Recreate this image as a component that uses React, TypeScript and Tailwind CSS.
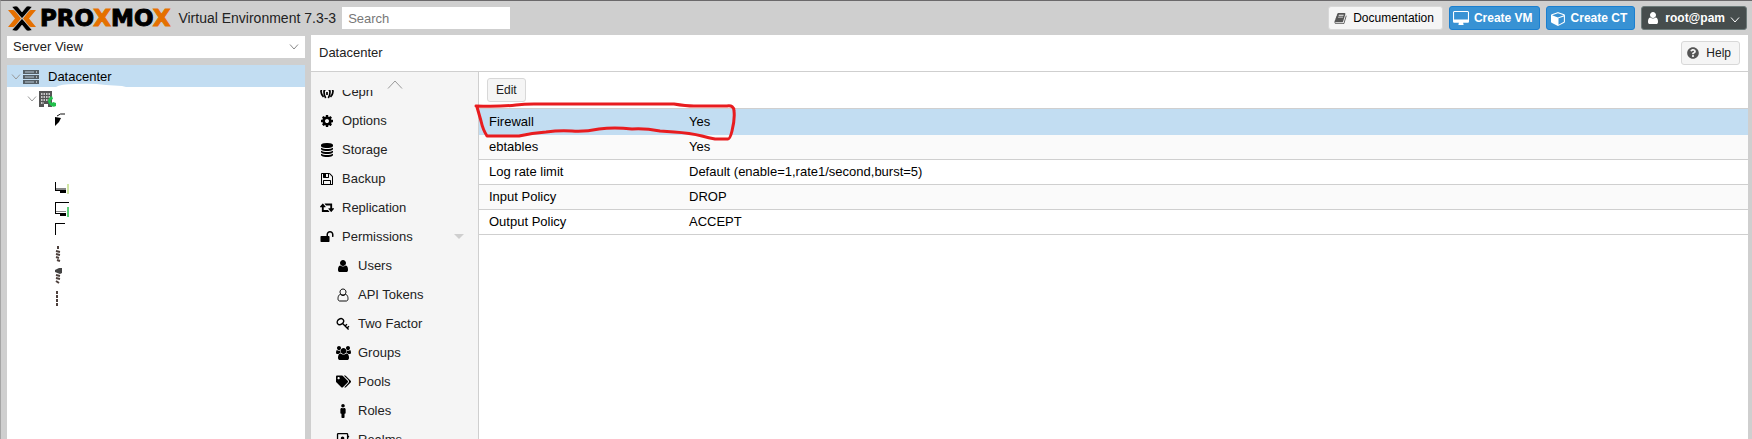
import type { ReactNode } from "react";
import { FaMale, FaQuestionCircle, FaRegAddressBook, FaTags } from "react-icons/fa";

const paths = {
  cube: "M896 1629l640-349v-636l-640 233v752zm-64-865l698-254-698-254-698 254zm832-252v768q0 35-18 65t-49 47l-704 384q-28 16-61 16t-61-16l-704-384q-31-17-49-47t-18-65v-768q0-40 23-73t61-47l704-256q22-8 44-8t44 8l704 256q38 14 61 47t23 73z",
  database:
    "M896 768q237 0 443-43t325-127v170q0 69-103 128t-280 93.5-385 34.5-385-34.5-280-93.5-103-128v-170q119 84 325 127t443 43zm0 768q237 0 443-43t325-127v170q0 69-103 128t-280 93.5-385 34.5-385-34.5-280-93.5-103-128v-170q119 84 325 127t443 43zm0-384q237 0 443-43t325-127v170q0 69-103 128t-280 93.5-385 34.5-385-34.5-280-93.5-103-128v-170q119 84 325 127t443 43zm0-1152q208 0 385 34.5t280 93.5 103 128v128q0 69-103 128t-280 93.5-385 34.5-385-34.5-280-93.5-103-128v-128q0-69 103-128t280-93.5 385-34.5z",
  cog: "M1152 896q0-106-75-181t-181-75-181 75-75 181 75 181 181 75 181-75 75-181zm512-109v222q0 12-8 23t-20 13l-185 28q-19 54-39 91 35 50 107 138 10 12 10 25t-9 23q-27 37-99 108t-94 71q-12 0-26-9l-138-108q-44 23-91 38-16 136-29 186-7 28-36 28h-222q-14 0-24.5-8.5t-11.5-21.5l-28-184q-49-16-90-37l-141 107q-10 9-25 9-14 0-25-11-126-114-165-168-7-10-7-23 0-12 8-23 15-21 51-66.5t54-70.5q-27-50-41-99l-183-27q-13-2-21-12.5t-8-23.5v-222q0-12 8-23t19-13l186-28q14-46 39-92-40-57-107-138-10-12-10-24 0-10 9-23 26-36 98.5-107.5t94.5-71.5q13 0 26 10l138 107q44-23 91-38 16-136 29-186 7-28 36-28h222q14 0 24.5 8.5t11.5 21.5l28 184q49 16 90 37l142-107q9-9 24-9 13 0 25 10 129 119 165 170 7 8 7 22 0 12-8 23-15 21-51 66.5t-54 70.5q26 50 41 98l183 28q13 2 21 12.5t8 23.5z",
  floppy:
    "M512 1536h768v-384h-768v384zm896 0h128v-896q0-14-10-38.5t-20-34.5l-281-281q-10-10-34-20t-39-10v416q0 40-28 68t-68 28h-576q-40 0-68-28t-28-68v-416h-128v1280h128v-416q0-40 28-68t68-28h832q40 0 68 28t28 68v416zm-384-928v-320q0-13-9.5-22.5t-22.5-9.5h-192q-13 0-22.5 9.5t-9.5 22.5v320q0 13 9.5 22.5t22.5 9.5h192q13 0 22.5-9.5t9.5-22.5zm640 32v928q0 40-28 68t-68 28h-1344q-40 0-68-28t-28-68v-1344q0-40 28-68t68-28h928q40 0 88 20t76 48l280 280q28 28 48 76t20 88z",
  user: "M1536 1399q0 109-62.5 187t-150.5 78h-854q-88 0-150.5-78t-62.5-187q0-85 8.5-160.5t31.5-152 58.5-131 94-89 134.5-34.5q131 128 313 128t313-128q76 0 134.5 34.5t94 89 58.5 131 31.5 152 8.5 160.5zm-256-887q0 159-112.5 271.5t-271.5 112.5-271.5-112.5-112.5-271.5 112.5-271.5 271.5-112.5 271.5 112.5 112.5 271.5z",
  users:
    "M593 896q-162 5-265 128h-134q-82 0-138-40.5t-56-118.5q0-353 124-353 6 0 43.5 21t97.5 42.5 119 21.5q67 0 133-23-5 37-5 66 0 139 81 256zm1071 637q0 120-73 189.5t-194 69.5h-874q-121 0-194-69.5t-73-189.5q0-53 3.5-103.5t14-109 26.5-108.5 43-97.5 62-81 85.5-53.5 111.5-20q10 0 43 21.5t73 48 107 48 135 21.5 135-21.5 107-48 73-48 43-21.5q61 0 111.5 20t85.5 53.5 62 81 43 97.5 26.5 108.5 14 109 3.5 103.5zm-1024-1277q0 106-75 181t-181 75-181-75-75-181 75-181 181-75 181 75 75 181zm704 384q0 159-112.5 271.5t-271.5 112.5-271.5-112.5-112.5-271.5 112.5-271.5 271.5-112.5 271.5 112.5 112.5 271.5zm576 225q0 78-56 118.5t-138 40.5h-134q-103-123-265-128 81-117 81-256 0-29-5-66 66 23 133 23 59 0 119-21.5t97.5-42.5 43.5-21q124 0 124 353zm-128-609q0 106-75 181t-181 75-181-75-75-181 75-181 181-75 181 75 75 181z",
  desktop:
    "M1728 992v-832q0-13-9.5-22.5t-22.5-9.5h-1600q-13 0-22.5 9.5t-9.5 22.5v832q0 13 9.5 22.5t22.5 9.5h1600q13 0 22.5-9.5t9.5-22.5zm128-832v1088q0 66-47 113t-113 47h-544q0 37 16 77.5t32 71 16 43.5q0 26-19 45t-45 19h-512q-26 0-45-19t-19-45q0-14 16-44t32-70 16-78h-544q-66 0-113-47t-47-113v-1088q0-66 47-113t113-47h1600q66 0 113 47t47 113z",
  book: "M1703 478q40 57 18 129l-275 906q-19 64-76.5 107.5t-122.5 43.5h-923q-77 0-148.5-53.5t-99.5-131.5q-24-67-2-127 0-4 3-27t4-37q1-8-3-21.5t-3-19.5q2-11 8-21t16.5-23.5 16.5-23.5q23-38 45-91.5t30-91.5q3-10 .5-30t-.5-28q3-11 17-28t17-23q21-36 42-92t25-90q1-9-2.5-32t.5-28q4-13 22-30.5t22-22.5q19-26 42.5-84.5t27.5-96.5q1-8-3-25.5t-2-26.5q2-8 9-18t18-23 17-21q8-12 16.5-30.5t15-35 16-36 19.5-32 26.5-23.5 36-11.5 47.5 5.5l-1 3q38-9 51-9h761q74 0 114 56t18 130l-274 906q-36 119-71.5 153.5t-128.5 34.5h-869q-27 0-38 15-11 16-1 43 24 70 144 70h923q29 0 56-15.5t35-41.5l300-987q7-22 5-57 38 15 59 43zm-1064 2q-4 13 2 22.5t20 9.5h608q13 0 25.5-9.5t16.5-22.5l21-64q4-13-2-22.5t-20-9.5h-608q-13 0-25.5 9.5t-16.5 22.5zm-83 256q-4 13 2 22.5t20 9.5h608q13 0 25.5-9.5t16.5-22.5l21-64q4-13-2-22.5t-20-9.5h-608q-13 0-25.5 9.5t-16.5 22.5z",
  retweet:
    "M1280 1504q0 13-9.5 22.5t-22.5 9.5h-960q-8 0-13.5-2t-9-7-5.5-8-3-11.5-1-11.5v-600h-192q-26 0-45-19t-19-45q0-24 15-41l320-384q19-22 49-22t49 22l320 384q15 17 15 41 0 26-19 45t-45 19h-192v384h576q16 0 25 11l160 192q7 10 7 21zm640-416q0 24-15 41l-320 384q-20 23-49 23t-49-23l-320-384q-15-17-15-41 0-26 19-45t45-19h192v-384h-576q-16 0-25-12l-160-192q-7-9-7-20 0-13 9.5-22.5t22.5-9.5h960q8 0 13.5 2t9 7 5.5 8 3 11.5 1 11.5v600h192q26 0 45 19t19 45z",
  unlock:
    "M1728 576v256q0 26-19 45t-45 19h-64q-26 0-45-19t-19-45v-256q0-106-75-181t-181-75-181 75-75 181v192h96q40 0 68 28t28 68v576q0 40-28 68t-68 28h-960q-40 0-68-28t-28-68v-576q0-40 28-68t68-28h672v-192q0-185 131.5-316.5t316.5-131.5 316.5 131.5 131.5 316.5z",
};

function Glyph({ name, className = "size-[14px]", viewBox = "0 0 1792 1792" }: { name: keyof typeof paths; className?: string; viewBox?: string }) {
  return (
    <svg viewBox={viewBox} className={className} fill="currentColor" aria-hidden="true">
      <path d={paths[name]} />
    </svg>
  );
}

function Chevron({ className = "" }: { className?: string }) {
  return (
    <svg viewBox="0 0 10 6" className={`h-[6px] w-[10px] ${className}`} fill="none" stroke="currentColor" aria-hidden="true">
      <path d="M1 .5l4 4.5 4-4.5" />
    </svg>
  );
}

function CephIcon() {
  return (
    <svg viewBox="0 0 14 14" className="size-[14px]" fill="none" stroke="currentColor" strokeWidth="1.7" aria-hidden="true">
      <path d="M1 7A6 6 0 0 1 13 7M4 7a3 3 0 0 1 6 0" />
      <path d="M1 7Q1.5 10 3.5 12M4 7Q4 10.500 5.700 13M7 7v3M10 7Q10 10.500 8.300 13M13 7Q12.500 10 10.500 12" />
    </svg>
  );
}

function KeyIcon() {
  return (
    <svg viewBox="0 0 14 14" className="size-[14px]" fill="none" stroke="currentColor" strokeWidth="1.4" aria-hidden="true">
      <ellipse cx="4.4" cy="4.600" rx="3.400" ry="2.700" transform="rotate(-35 4.4 4.600)" />
      <path d="M6.600 6.400l6 6M9 9l2-1.800M11 11l2-1.800" />
    </svg>
  );
}

function UserOutline() {
  return (
    <svg viewBox="0 0 1792 1792" className="size-[14px]" fill="none" stroke="currentColor" strokeWidth="120" aria-hidden="true">
      <path d={paths.user} />
    </svg>
  );
}

type NavItem = { label: string; icon: ReactNode; sub?: boolean; open?: boolean };

const nav: NavItem[] = [
  { label: "Ceph", icon: <CephIcon /> },
  { label: "Options", icon: <Glyph name="cog" /> },
  { label: "Storage", icon: <Glyph name="database" /> },
  { label: "Backup", icon: <Glyph name="floppy" /> },
  { label: "Replication", icon: <Glyph name="retweet" viewBox="0 100 1920 1792" /> },
  { label: "Permissions", icon: <Glyph name="unlock" />, open: true },
  { label: "Users", icon: <Glyph name="user" />, sub: true },
  { label: "API Tokens", icon: <UserOutline />, sub: true },
  { label: "Two Factor", icon: <KeyIcon />, sub: true },
  { label: "Groups", icon: <Glyph name="users" viewBox="0 0 1920 1792" className="h-[14px] w-[15px]" />, sub: true },
  { label: "Pools", icon: <FaTags className="size-[15px]" />, sub: true },
  { label: "Roles", icon: <FaMale className="size-[14px]" />, sub: true },
  { label: "Realms", icon: <FaRegAddressBook className="size-[14px]" />, sub: true },
];

const options = [
  ["Firewall", "Yes"],
  ["ebtables", "Yes"],
  ["Log rate limit", "Default (enable=1,rate1/second,burst=5)"],
  ["Input Policy", "DROP"],
  ["Output Policy", "ACCEPT"],
];

// Guest rows below the node; most of each icon is painted over
const guests: ReactNode[] = [
  <g key="a">
    <path d="M1 8l6 1-2 4-4 4z" />
    <path d="M3 7q3-3 8-2" fill="none" stroke="#111" />
  </g>,
  null,
  null,
  <g key="b">
    <path d="M1 7h1v7h10v4H6v-2H1z" />
    <path d="M2 13h10v2H2z" fill="#888" />
    <path d="M14 9v10" stroke="#a4cf4a" />
  </g>,
  <g key="c">
    <path d="M1 5h14v1H2v10h10v3H6v-2H1z" />
    <path d="M2 14h10v1H2z" fill="#888" />
    <path d="M14 10v10" stroke="#27c24c" strokeWidth="1.500" />
  </g>,
  <path key="d" d="M1 4h10v1H2v11H1z" />,
  <path key="e" d="M4 5v3M2 10l4 1M2 13l4 1M2 16l3 1M3 19l3 1" stroke="#4d403c" strokeWidth="2" />,
  <g key="f">
    <path d="M1 7l4-2h3v5l-2 1-5-2z" fill="#444" />
    <path d="M2 12l4 1M2 15l4 1M2 18l3 2" stroke="#4d403c" strokeWidth="2" />
  </g>,
  <path key="g" d="M3 6v15" stroke="#4d403c" strokeWidth="2" strokeDasharray="3 1" />,
];

function Logo() {
  return (
    <div className="flex items-center gap-1">
      <svg viewBox="0 0 28 25" className="h-[25px] w-7" aria-hidden="true">
        <path d="M0 4h5q1 0 2 1l6 7.500-6 7.500q-1 1-2 1H0l7-8.500z" fill="#e57000" />
        <path d="M28 4h-5q-1 0-2 1l-6 7.500 6 7.500q1 1 2 1h5l-7-8.500z" fill="#e57000" />
        <path
          d="M4 1q2-1 4-1 1 0 2 1l4 5 4-5q1-1 2-1 2 0 4 1L14 12.500zM4 24q2 1 4 1 1 0 2-1l4-5 4 5q1 1 2 1 2 0 4-1L14 12.500z"
          fill="#000"
          stroke="#cfcfcf"
          strokeWidth=".6"
        />
      </svg>
      <span className="font-['DejaVu_Sans',sans-serif] text-[23px] leading-6 font-bold text-black [-webkit-text-stroke:1px]">
        PRO<span className="text-[#e57000]">X</span>MO<span className="text-[#e57000]">X</span>
      </span>
    </div>
  );
}

function Header() {
  return (
    <header className="flex h-[34px] shrink-0 items-center pr-[5px] pl-[7px]">
      <Logo />
      <span className="ml-2 text-[14px] whitespace-nowrap text-[#222]">Virtual Environment 7.3-3</span>
      <input
        type="text"
        aria-label="Search"
        placeholder="Search"
        className="ml-[6px] h-[22px] w-[168px] bg-white px-[6px] text-[13px] outline-none placeholder:text-[#777]"
      />
      <div className="ml-auto flex gap-[6px] text-[12px] whitespace-nowrap">
        <button className="flex h-6 items-center gap-[6px] rounded-[3px] border border-[#d8d8d8] bg-[#f5f5f5] pr-2 pl-[5px] text-black">
          <Glyph name="book" className="size-[13px] text-[#555]" />
          Documentation
        </button>
        <button className="flex h-6 items-center gap-[5px] rounded-[3px] border border-[#1a7fd0] bg-[#3892d4] pr-[6px] pl-[3px] font-bold text-white">
          <Glyph name="desktop" viewBox="-64 0 1920 1792" className="h-[15px] w-4" />
          Create VM
        </button>
        <button className="flex h-6 items-center gap-[5px] rounded-[3px] border border-[#1a7fd0] bg-[#3892d4] pr-[7px] pl-1 font-bold text-white">
          <Glyph name="cube" className="size-[15px]" />
          Create CT
        </button>
        <button className="flex h-6 items-center gap-[5px] rounded-[3px] border border-[#6c7a79] bg-[#464d4d] pr-[6px] pl-1 font-bold text-white">
          <Glyph name="user" className="size-[14px]" />
          root@pam
          <Chevron className="mt-1" />
        </button>
      </div>
    </header>
  );
}

function ServerIcon() {
  return (
    <svg viewBox="0 0 16 14" className="h-[14px] w-4" aria-hidden="true">
      {[0, 5, 10].map((y) => (
        <g key={y}>
          <rect y={y} width="16" height="4" fill="#555f66" />
          <path d={`M2 ${y + 2}h9`} stroke="#b8c8d4" />
          <path d={`M13 ${y + 2}h1`} stroke="#fff" />
        </g>
      ))}
    </svg>
  );
}

function NodeIcon() {
  return (
    <svg viewBox="0 0 17 16" className="h-4 w-[17px]" aria-hidden="true">
      <path d="M0 0h13v16H0z" fill="#555" />
      <path d="M2 3h9M2 6h9M2 9h9M2 12h3" stroke="#eee" strokeWidth="1.500" strokeDasharray="1.500 1" />
      <path d="M5 13h4v3H5z" fill="#fff" />
      <path d="M11 6q-4 4 0 8 3 3 6 1v-3l-3-1-1 1q-2-1-1-3l2-1-1-3z" fill="#21bf4b" />
    </svg>
  );
}

function ServerTree() {
  return (
    <aside className="flex w-[298px] shrink-0 flex-col gap-[7px] pt-px">
      <button className="flex h-[22px] shrink-0 items-center justify-between bg-white px-[6px] text-[13px] text-[#222]">
        Server View
        <Chevron className="text-[#888]" />
      </button>
      <ul className="min-h-0 flex-1 overflow-hidden bg-white text-[13px] text-black">
        <li className="relative flex h-[22px] items-center bg-[#c2ddf2] pt-px pl-1">
          <Chevron className="mr-[2px] text-[#999]" />
          <ServerIcon />
          <span className="ml-[9px]">Datacenter</span>
          {/* brush mark that hides the node name */}
          <svg viewBox="0 0 70 4" className="absolute bottom-0 left-[49px] h-1 w-[70px]" aria-hidden="true">
            <path d="M0 4Q4 1 20 1 36 0 50 2L66 3 70 4z" fill="#fff" />
          </svg>
        </li>
        <li className="flex h-[22px] items-center pt-px pl-5">
          <Chevron className="mr-[2px] text-[#999]" />
          <NodeIcon />
        </li>
        {guests.map((mark, i) => (
          <li key={i} className="flex h-[22px] pl-[47px]">
            {mark && (
              <svg viewBox="0 0 16 22" className="h-[22px] w-4" aria-hidden="true">
                {mark}
              </svg>
            )}
          </li>
        ))}
      </ul>
    </aside>
  );
}

function SideNav() {
  return (
    <nav className="flex w-[168px] shrink-0 flex-col border-r border-[#cfcfcf] bg-[#f5f5f5] text-[13px] text-[#222]">
      <button aria-label="Scroll up" className="flex h-[18px] shrink-0 items-center justify-center pt-[6px] text-[#999]">
        <svg viewBox="0 0 16 9" className="h-[9px] w-4" fill="none" stroke="currentColor" aria-hidden="true">
          <path d="M1 8.500l7-7.500 7 7.500" />
        </svg>
      </button>
      <div className="flex min-h-0 flex-1 flex-col overflow-hidden">
        <ul className="-mt-[13px]">
          {nav.map((item) => (
            <li key={item.label}>
              <a href="#" className={`flex h-[29px] items-center gap-[7px] pr-[14px] ${item.sub ? "pl-6" : "pl-2"}`}>
                <span className="flex w-4 shrink-0 justify-center text-black">{item.icon}</span>
                {item.label}
                {item.open && (
                  <svg viewBox="0 0 10 5" className="ml-auto h-[5px] w-[10px]" aria-hidden="true">
                    <path d="M0 0h10L5 5z" fill="#cfcfcf" />
                  </svg>
                )}
              </a>
            </li>
          ))}
        </ul>
      </div>
    </nav>
  );
}

function FirewallOptions() {
  return (
    <section className="min-w-0 flex-1 bg-white">
      <div className="flex h-9 items-center px-2">
        <button className="h-6 rounded-[3px] border border-[#d8d8d8] bg-[#f5f5f5] px-2 text-[12px] text-[#222]">Edit</button>
      </div>
      <div className="relative border-t border-[#cfcfcf]">
        <table className="w-full table-fixed border-separate border-spacing-0 text-left text-[13px] leading-6 text-black">
          <tbody>
            {options.map(([name, value], i) => {
              const cell = i === 0 ? "border-b border-[#c2ddf2] pt-px pl-[10px]" : "border-b border-[#cfcfcf] pl-[10px]";
              return (
                <tr key={name} className={i === 0 ? "bg-[#c2ddf2]" : "even:bg-[#fafafa]"}>
                  <th scope="row" className={`w-[200px] font-normal ${cell}`}>
                    {name}
                  </th>
                  <td className={cell}>{value}</td>
                </tr>
              );
            })}
          </tbody>
        </table>
        {/* hand-drawn marker round the first row */}
        <svg
          viewBox="0 0 264 42"
          className="pointer-events-none absolute -top-[7px] -left-[5px] h-[42px] w-[264px]"
          fill="none"
          stroke="#e81c1f"
          strokeWidth="3"
          strokeLinecap="round"
          strokeLinejoin="round"
          aria-hidden="true"
        >
          <path d="M2 4Q24 5 42 3 50 2 60 2H200Q212 4 220 4H253Q260 3 260 9 261 17 258 29 256 37 254 37H241Q235 36 228 34 216 31 200 30L186 29Q170 26 158 27 140 25 125 27 110 30 98 29 86 28 72 30 58 31 45 34H13Q9 28 7 19L3 5" />
        </svg>
      </div>
    </section>
  );
}

export default function App() {
  return (
    <div className="flex h-screen flex-col overflow-hidden border-t border-l border-t-[#6b696b] border-l-[#a5a5a5] bg-[#cfcfcf] font-['Liberation_Sans',Arial,sans-serif]">
      <Header />
      <div className="flex min-h-0 flex-1 gap-[6px] pr-1 pl-[6px]">
        <ServerTree />
        <main className="flex min-w-0 flex-1 flex-col bg-white">
          <div className="flex h-[37px] shrink-0 items-center justify-between border-b border-[#cfcfcf] px-2">
            <h1 className="text-[13px] text-[#222]">Datacenter</h1>
            <button className="flex h-6 items-center gap-[7px] rounded-[3px] border border-[#d8d8d8] bg-[#f5f5f5] pr-2 pl-[5px] text-[12px] text-[#222]">
              <FaQuestionCircle className="size-3 text-[#555]" />
              Help
            </button>
          </div>
          <div className="flex min-h-0 flex-1">
            <SideNav />
            <FirewallOptions />
          </div>
        </main>
      </div>
    </div>
  );
}
